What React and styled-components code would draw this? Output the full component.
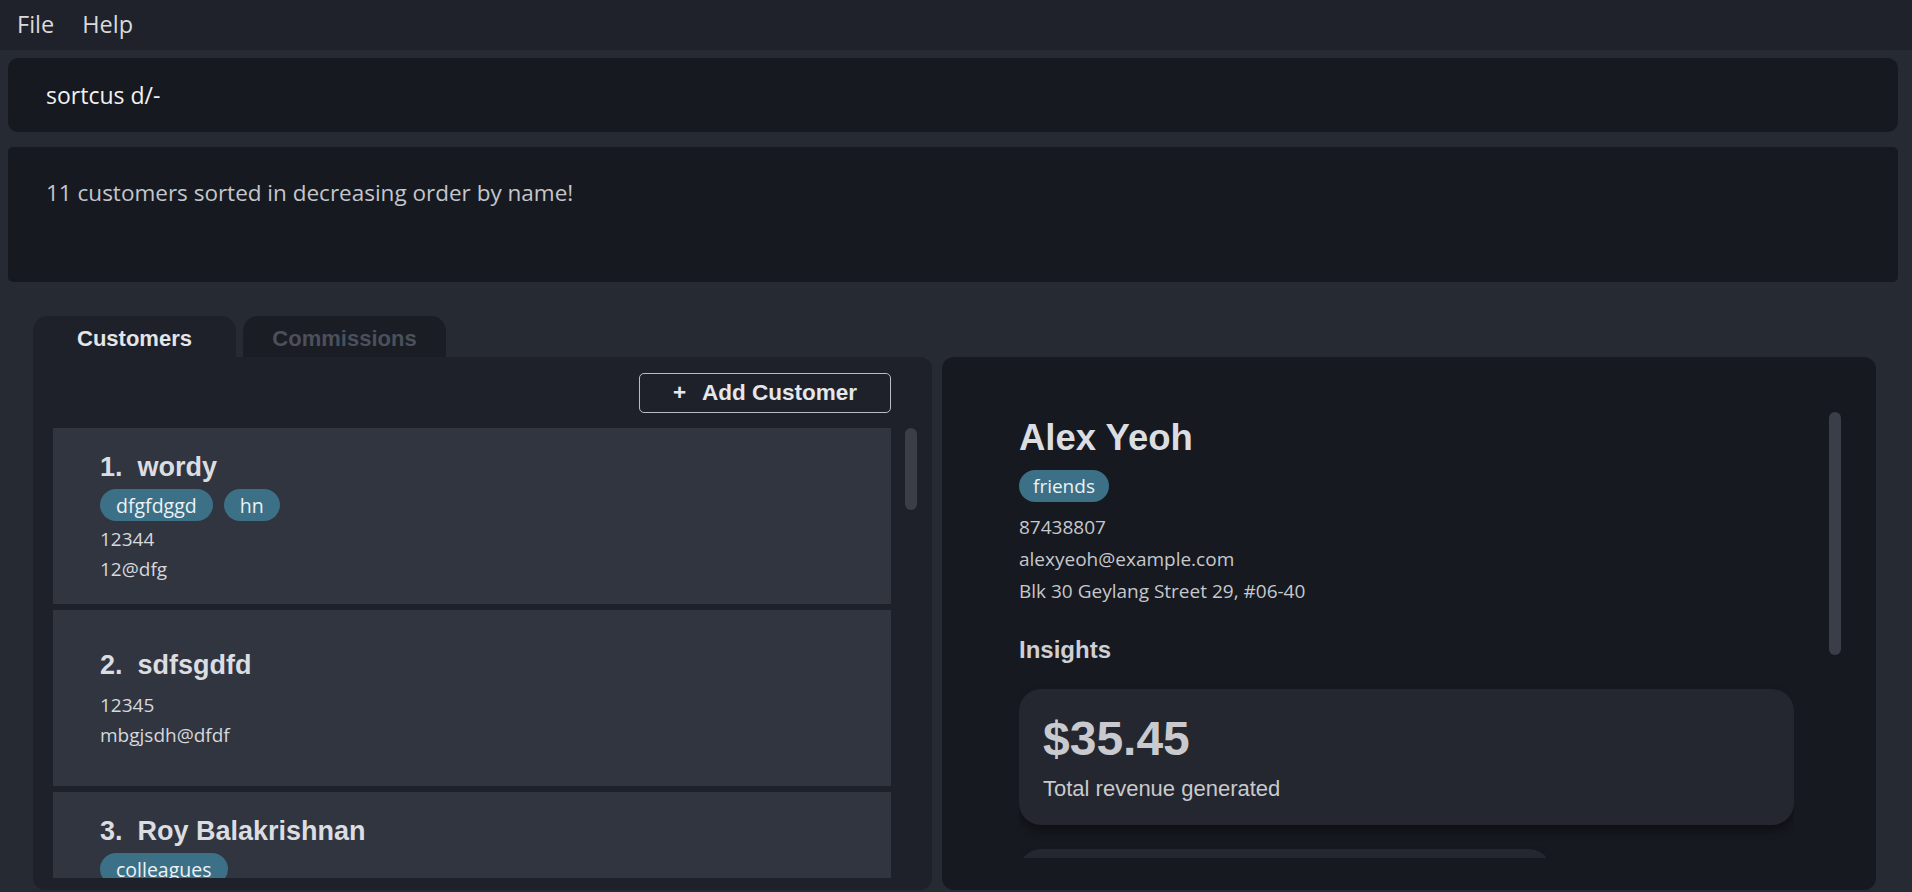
import styled, { createGlobalStyle } from "styled-components";

const GlobalStyle = createGlobalStyle`
  html, body {
    margin: 0;
    padding: 0;
    background: #262a32;
    height: 892px;
    overflow: hidden;
  }
  * { box-sizing: border-box; }
`;

const Page = styled.div`
  width: 1912px;
  height: 892px;
  display: flex;
  flex-direction: column;
  background: #262a32;
  font-family: "Open Sans", "Noto Sans", sans-serif;
`;

const MenuBar = styled.div`
  height: 50px;
  flex-shrink: 0;
  background: #1f222a;
  display: flex;
  align-items: center;
  gap: 28px;
  padding-left: 17px;
  padding-bottom: 2px;
`;

const MenuItem = styled.span`
  color: #d9dadd;
  font-size: 23.5px;
`;

const Main = styled.div`
  flex: 1;
  min-height: 0;
  display: flex;
  flex-direction: column;
  padding: 8px 14px 2px 8px;
`;

const CommandBox = styled.div`
  height: 74px;
  flex-shrink: 0;
  background: #161920;
  border-radius: 10px;
  display: flex;
  align-items: center;
  padding-left: 38px;
  color: #f2f2f2;
  font-size: 23px;
`;

const ResultBox = styled.div`
  height: 135px;
  flex-shrink: 0;
  margin-top: 15px;
  background: #161920;
  border-radius: 5px;
  padding: 30px 38px;
  color: #c3c6cc;
  font-size: 22.5px;
`;

const Workspace = styled.div`
  flex: 1;
  min-height: 0;
  display: flex;
  gap: 10px;
  margin: 34px 22px 0 25px;
`;

const LeftColumn = styled.div`
  width: 899px;
  display: flex;
  flex-direction: column;
`;

const TabBar = styled.div`
  height: 41px;
  display: flex;
  gap: 7px;
`;

const Tab = styled.div`
  width: 203px;
  height: 41px;
  border-radius: 15px 15px 0 0;
  background: ${(p) => (p.$active ? "#1e2129" : "#1a1d24")};
  color: ${(p) => (p.$active ? "#e4e5e8" : "#4b505b")};
  font-family: "Liberation Sans", Arial, sans-serif;
  font-weight: bold;
  font-size: 22px;
  display: flex;
  align-items: center;
  justify-content: center;
  padding-top: 4px;
`;

const ListPanel = styled.div`
  flex: 1;
  min-height: 0;
  background: #1e2129;
  border-radius: 0 12px 12px 12px;
  padding: 15px 15px 12px 20px;
  display: flex;
  flex-direction: column;
`;

const ButtonRow = styled.div`
  display: flex;
  justify-content: flex-end;
  padding-right: 26px;
  margin-bottom: 15px;
  padding-top: 1px;
`;

const AddButton = styled.button`
  width: 252px;
  height: 40px;
  background: transparent;
  border: 1.5px solid #b9bcc3;
  border-radius: 5px;
  color: #e6e7ea;
  font-family: "Liberation Sans", Arial, sans-serif;
  font-weight: bold;
  font-size: 22.5px;
  display: flex;
  align-items: center;
  justify-content: center;
  gap: 16px;
  padding: 0;
`;

const ScrollArea = styled.div`
  flex: 1;
  min-height: 0;
  display: flex;
  gap: 14px;
`;

const List = styled.div`
  flex: 1;
  overflow: hidden;
  display: flex;
  flex-direction: column;
  gap: 6px;
`;

const ScrollTrack = styled.div`
  width: 12px;
  flex-shrink: 0;
`;

const Thumb = styled.div`
  width: 12px;
  height: ${(p) => p.$h}px;
  border-radius: 6px;
  background: #3a3e49;
`;

const Card = styled.div`
  height: 176px;
  flex-shrink: 0;
  background: #313540;
  padding-left: 47px;
  display: flex;
  flex-direction: column;
  justify-content: center;
  gap: 6px;
`;

const CardName = styled.div`
  font-family: "Liberation Sans", Arial, sans-serif;
  font-weight: bold;
  font-size: 27px;
  line-height: 32px;
  color: #dcdde0;
  white-space: pre;
`;

const Tags = styled.div`
  display: flex;
  gap: 11px;
`;

const Tag = styled.span`
  height: 32px;
  padding: 0 16px;
  border-radius: 16px;
  background: #3b7087;
  color: #eef2f4;
  font-size: 19.5px;
  display: flex;
  align-items: center;
`;

const Detail = styled.div`
  font-size: 19px;
  line-height: 24px;
  color: #d6d8dc;
`;

const DetailPanel = styled.div`
  flex: 1;
  margin-top: 41px;
  background: #161920;
  border-radius: 12px;
  padding: 55px 35px 32px 77px;
  display: flex;
  gap: 35px;
  min-height: 0;
`;

const DetailContent = styled.div`
  flex: 1;
  overflow: hidden;
  display: flex;
  flex-direction: column;
`;

const PersonName = styled.div`
  margin-top: 6px;
  font-family: "Liberation Sans", Arial, sans-serif;
  font-weight: bold;
  font-size: 36.5px;
  line-height: 40px;
  color: #dcdde0;
`;

const PersonTags = styled(Tags)`
  margin-top: 12px;

  & > span {
    padding: 0 14px;
    font-size: 19px;
  }
`;

const InfoList = styled.div`
  margin-top: 9px;
  display: flex;
  flex-direction: column;
`;

const Info = styled.div`
  font-size: 19px;
  line-height: 32px;
  color: #c6c8cc;
`;

const SectionTitle = styled.div`
  margin-top: 29px;
  font-family: "Liberation Sans", Arial, sans-serif;
  font-weight: bold;
  font-size: 24px;
  line-height: 28px;
  color: #cfd0d4;
`;

const StatCard = styled.div`
  flex-shrink: 0;
  width: ${(p) => p.$width || "100%"};
  min-height: ${(p) => p.$minHeight || 0}px;
  margin-top: ${(p) => p.$top}px;
  background: #242730;
  border-radius: 22px;
  padding: 22px 24px 23px;
  box-shadow: 0 6px 10px rgba(0, 0, 0, 0.35);
  font-family: "Liberation Sans", Arial, sans-serif;
`;

const StatValue = styled.div`
  font-weight: bold;
  font-size: 48px;
  line-height: 55px;
  color: #c9cacd;
`;

const StatLabel = styled.div`
  margin-top: 10px;
  font-size: 22px;
  line-height: 26px;
  color: #c9cacd;
`;

const customers = [
  { name: "wordy", tags: ["dfgfdggd", "hn"], phone: "12344", email: "12@dfg" },
  { name: "sdfsgdfd", tags: [], phone: "12345", email: "mbgjsdh@dfdf" },
  { name: "Roy Balakrishnan", tags: ["colleagues"], phone: "92624417", email: "royb@example.com" },
];

function CustomerCard({ index, customer }) {
  return (
    <Card>
      <CardName>{`${index}.  ${customer.name}`}</CardName>
      <Tags>
        {customer.tags.map((t) => (
          <Tag key={t}>{t}</Tag>
        ))}
      </Tags>
      <Detail>{customer.phone}</Detail>
      <Detail>{customer.email}</Detail>
    </Card>
  );
}

export default function App() {
  return (
    <Page>
      <GlobalStyle />
      <MenuBar>
        <MenuItem>File</MenuItem>
        <MenuItem>Help</MenuItem>
      </MenuBar>
      <Main>
        <CommandBox>sortcus d/-</CommandBox>
        <ResultBox>11 customers sorted in decreasing order by name!</ResultBox>
        <Workspace>
          <LeftColumn>
            <TabBar>
              <Tab $active>Customers</Tab>
              <Tab>Commissions</Tab>
            </TabBar>
            <ListPanel>
              <ButtonRow>
                <AddButton>
                  <span>+</span>
                  <span>Add Customer</span>
                </AddButton>
              </ButtonRow>
              <ScrollArea>
                <List>
                  {customers.map((c, i) => (
                    <CustomerCard key={c.name} index={i + 1} customer={c} />
                  ))}
                </List>
                <ScrollTrack>
                  <Thumb $h={82} />
                </ScrollTrack>
              </ScrollArea>
            </ListPanel>
          </LeftColumn>
          <DetailPanel>
            <DetailContent>
              <PersonName>Alex Yeoh</PersonName>
              <PersonTags>
                <Tag>friends</Tag>
              </PersonTags>
              <InfoList>
                <Info>87438807</Info>
                <Info>alexyeoh@example.com</Info>
                <Info>Blk 30 Geylang Street 29, #06-40</Info>
              </InfoList>
              <SectionTitle>Insights</SectionTitle>
              <StatCard $top={25}>
                <StatValue>$35.45</StatValue>
                <StatLabel>Total revenue generated</StatLabel>
              </StatCard>
              <StatCard $top={24} $width="532px" $minHeight={136} />
            </DetailContent>
            <ScrollTrack>
              <Thumb $h={243} />
            </ScrollTrack>
          </DetailPanel>
        </Workspace>
      </Main>
    </Page>
  );
}
